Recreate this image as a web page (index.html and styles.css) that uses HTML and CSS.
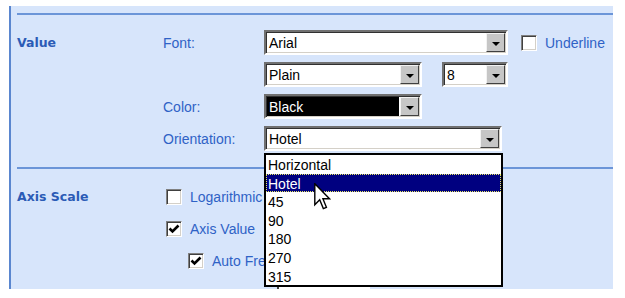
FILE: index.html
```html
<!DOCTYPE html>
<html lang="en">
<head>
    <meta charset="UTF-8">
    <title>Chart Axis Properties</title>
    <link rel="stylesheet" href="styles.css">
</head>
<body>
    <div class="panel">
        <section class="group group-value">
            <div class="group-title">Value</div>
            <div class="fields">
                <div class="row">
                    <span class="field-label">Font:</span>
                    <div class="combo combo-font">
                        <span class="combo-text">Arial</span>
                        <span class="combo-btn"></span>
                    </div>
                    <div class="check check-underline">
                        <span class="box"></span>
                        <span class="check-label">Underline</span>
                    </div>
                </div>
                <div class="row">
                    <span class="field-label"></span>
                    <div class="combo combo-style">
                        <span class="combo-text">Plain</span>
                        <span class="combo-btn"></span>
                    </div>
                    <div class="combo combo-size">
                        <span class="combo-text">8</span>
                        <span class="combo-btn"></span>
                    </div>
                </div>
                <div class="row">
                    <span class="field-label">Color:</span>
                    <div class="combo combo-color">
                        <span class="combo-text">Black</span>
                        <span class="combo-btn"></span>
                    </div>
                </div>
                <div class="row">
                    <span class="field-label">Orientation:</span>
                    <div class="combo combo-orient">
                        <span class="combo-text">Hotel</span>
                        <span class="combo-btn"></span>
                        <ul class="listbox">
                            <li>Horizontal</li>
                            <li class="selected">Hotel</li>
                            <li>45</li>
                            <li>90</li>
                            <li>180</li>
                            <li>270</li>
                            <li>315</li>
                            <svg class="pointer" width="17" height="28" viewBox="0 0 12 20">
                                <path d="M0.5 0.5 L0.5 15.5 L4 12 L6.6 18.3 L8.8 17.4 L6.3 11.2 L11 11.2 Z" fill="#fff" stroke="#000" stroke-width="1"/>
                            </svg>
                        </ul>
                    </div>
                </div>
            </div>
        </section>

        <section class="group group-scale">
            <div class="group-title">Axis Scale</div>
            <div class="fields">
                <div class="row">
                    <div class="check check-indent">
                        <span class="box"></span>
                        <span class="check-label">Logarithmic</span>
                    </div>
                </div>
                <div class="row">
                    <div class="check check-indent">
                        <span class="box checked"><svg width="12" height="12" viewBox="0 0 12 12"><path d="M1.5 5.5 L4.5 8.5 L10.5 2.5" fill="none" stroke="#000" stroke-width="2.6"/></svg></span>
                        <span class="check-label">Axis Value</span>
                    </div>
                </div>
                <div class="row">
                    <div class="check check-nested">
                        <span class="box checked"><svg width="12" height="12" viewBox="0 0 12 12"><path d="M1.5 5.5 L4.5 8.5 L10.5 2.5" fill="none" stroke="#000" stroke-width="2.6"/></svg></span>
                        <span class="check-label">Auto Frequency</span>
                    </div>
                </div>
                <div class="row row-last">
                    <span class="field-label field-label-sub">Tick Interval:</span>
                    <div class="textbox"></div>
                </div>
            </div>
        </section>
    </div>
</body>
</html>
```

FILE: styles.css
```css
* { box-sizing: border-box; }
body {
    margin: 0;
    background: #ffffff;
    font-family: "Liberation Sans", Arial, sans-serif;
    font-size: 14px;
}
.panel {
    margin: 6px 0 0 9px;
    width: 604px;
    height: 283px;
    background: #d7e5fb;
    border-left: 2px solid #5a86cf;
    overflow: hidden;
}
.group {
    display: grid;
    grid-template-columns: 146px 1fr;
    margin-left: 6px;
    border-top: 2px solid #6b95d8;
}
.group-value { margin-top: 7px; padding: 15px 0 16px; }
.group-scale { padding-top: 15px; }
.group-title {
    font-family: "DejaVu Sans", Verdana, sans-serif;
    font-weight: bold;
    font-size: 12.5px;
    color: #2b5bb6;
    line-height: 25px;
}
.fields { display: flex; flex-direction: column; gap: 7px; }
.row { display: flex; align-items: center; height: 25px; }
.row-last { margin-top: 3px; }
.field-label { width: 101px; color: #2f62c6; }
.field-label-sub { width: auto; margin-left: 19px; margin-right: 8px; }

.combo {
    position: relative;
    display: flex;
    height: 25px;
    background: #ffffff;
    border: 2px solid;
    border-color: #707070 #ffffff #ffffff #707070;
    box-shadow: inset 1px 1px 0 #303030, inset -1px -1px 0 #d4d0c8;
}
.combo-text { flex: 1; padding: 2px 0 0 3px; line-height: 18px; color: #000; }
.combo-btn {
    position: relative;
    width: 19px;
    margin: 1px 1px 1px 0;
    background: #c6c6c6;
    border: 1px solid;
    border-color: #f2f2f2 #404040 #404040 #f2f2f2;
}
.combo-btn::after {
    content: "";
    position: absolute;
    left: 5px;
    top: 8px;
    border-left: 4px solid transparent;
    border-right: 4px solid transparent;
    border-top: 4px solid #000;
}
.combo-font { width: 244px; }
.combo-style { width: 158px; }
.combo-size { width: 66px; margin-left: 20px; }
.combo-color { width: 158px; }
.combo-color .combo-text { background: #000; color: #fff; margin: 1px; padding-top: 1px; padding-left: 2px; }
.combo-orient { width: 238px; }

.listbox {
    position: absolute;
    left: -2px;
    top: calc(100% + 4px);
    width: 239px;
    margin: 0;
    padding: 0;
    list-style: none;
    background: #ffffff;
    border: 2px solid #000;
    z-index: 5;
}
.listbox li {
    height: 18.6px;
    line-height: 18px;
    padding-left: 1px;
    color: #000;
    border: 1px solid transparent;
}
.listbox li.selected {
    background: #000080;
    color: #fff;
    border: 1px dotted #e8e860;
}
.pointer { position: absolute; left: 48px; top: 28px; }

.check { display: flex; align-items: center; }
.box {
    display: flex;
    align-items: center;
    justify-content: center;
    width: 16px;
    height: 16px;
    background: #fff;
    border: 1px solid;
    border-color: #808080 #ffffff #ffffff #808080;
    box-shadow: inset 1px 1px 0 #404040, inset -1px -1px 0 #d4d0c8;
}
.check-label { margin-left: 8px; color: #2f62c6; white-space: nowrap; }
.check-underline { margin-left: 13px; }
.check-indent { margin-left: 3px; }
.check-nested { margin-left: 25px; }
.textbox {
    width: 93px;
    height: 25px;
    margin-left: 8px;
    background: #fff;
    border-left: 2px solid #404040;
}
```
